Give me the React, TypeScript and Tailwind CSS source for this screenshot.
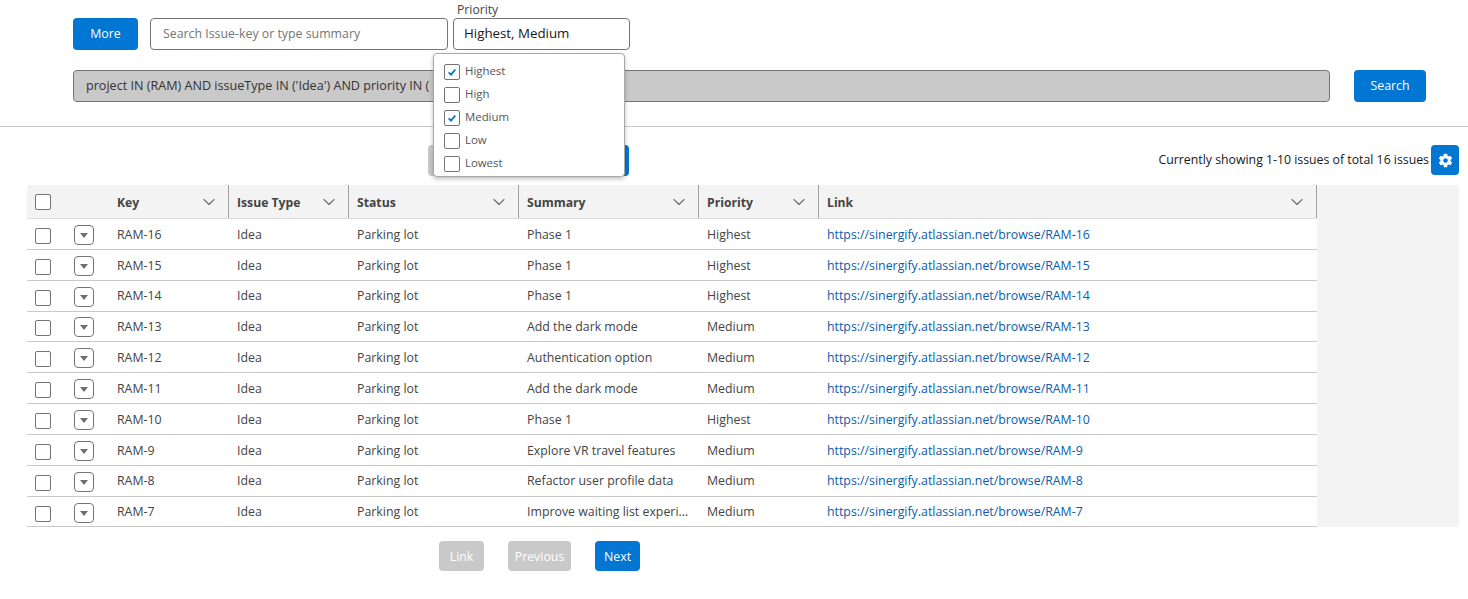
import { ChevronDown } from "lucide-react";
import { IoSettingsSharp } from "react-icons/io5";

const font = "font-['Open_Sans',sans-serif]";

const rows = [
  ["RAM-16", "Phase 1", "Highest"],
  ["RAM-15", "Phase 1", "Highest"],
  ["RAM-14", "Phase 1", "Highest"],
  ["RAM-13", "Add the dark mode", "Medium"],
  ["RAM-12", "Authentication option", "Medium"],
  ["RAM-11", "Add the dark mode", "Medium"],
  ["RAM-10", "Phase 1", "Highest"],
  ["RAM-9", "Explore VR travel features", "Medium"],
  ["RAM-8", "Refactor user profile data", "Medium"],
  ["RAM-7", "Improve waiting list experience", "Medium"],
];

const columns = ["Key", "Issue Type", "Status", "Summary", "Priority", "Link"];
const gridCols = "grid grid-cols-[82px_120px_120px_170px_180px_120px_498px]";

const Box = ({ checked = false }: { checked?: boolean }) => (
  <span className="flex h-4 w-4 shrink-0 items-center justify-center rounded-[2px] border border-[#747474] bg-white">
    {checked && (
      <svg viewBox="0 0 12 12" className="h-[10px] w-[10px]">
        <path d="M2 6.5 L4.8 9.2 L10 3" fill="none" stroke="#0176d3" strokeWidth="2.2" />
      </svg>
    )}
  </span>
);

const Btn = ({ label, off = false, className = "" }: { label: string; off?: boolean; className?: string }) => (
  <button className={`flex items-center justify-center rounded-[4px] pt-px text-white ${off ? "bg-[#c9c9c9]" : "bg-[#0176d3]"} ${className}`}>
    {label}
  </button>
);

export default function App() {
  return (
    <div className={`relative h-[599px] w-[1468px] overflow-hidden bg-white text-[12.35px] text-[#444] ${font}`}>
      <div className="flex pl-[73px] pt-[18px]">
        <Btn label="More" className="h-8 w-[65px]" />
        <div className="ml-3 flex h-8 w-[298px] items-center rounded-[4px] border border-[#747474] px-3 pt-px text-[#757575]">
          Search Issue-key or type summary
        </div>
        <div className="relative ml-[5px] flex h-8 w-[177px] items-center rounded-[4px] border border-[#747474] px-[10px] text-[13.3px] text-[#181818]">
          <span className="absolute -top-[18px] left-[3px] text-[12.2px] text-[#444]">Priority</span>
          Highest, Medium
        </div>
      </div>

      <div className="mt-5 flex pl-[73px]">
        <div className="flex h-8 w-[1257px] items-center rounded-[4px] border border-[#747474] bg-[#c9c9c9] px-3 pt-px text-[12.6px] text-[#333]">
          project IN (RAM) AND issueType IN ('Idea') AND priority IN (
        </div>
        <Btn label="Search" className="ml-6 h-8 w-[72px]" />
      </div>

      <div className="mt-6 h-px bg-[#c9c9c9]" />

      <div className="flex h-[58px] items-start pl-[428px] pr-[9px] pt-[18px]">
        <div className="flex gap-6">
          <Btn label="Link" off className="h-[31px] w-[45px]" />
          <Btn label="Previous" off className="h-[31px] w-[63px]" />
          <Btn label="Next" className="h-[31px] w-[45px]" />
        </div>
        <span className="ml-auto mr-[2px] mt-[6px] text-[12.3px] text-[#181818]">Currently showing 1-10 issues of total 16 issues</span>
        <button className="flex h-[30px] w-[28px] items-center justify-center rounded-[4px] bg-[#0176d3]">
          <IoSettingsSharp size={15} color="white" />
        </button>
      </div>

      <div className="ml-[27px] w-[1432px] bg-[#f3f3f3]">
        <div className={`${gridCols} h-[34px] w-[1290px] border-b border-[#dcdcdc]`}>
          <div className="flex items-center pl-2 pt-px">
            <Box />
          </div>
          {columns.map((c) => (
            <div key={c} className="flex h-[33px] items-center justify-between border-r border-[#a0a0a0] pl-2 pr-[9px] pt-[3px] text-[12.2px] font-bold text-[#444]">
              {c}
              <ChevronDown size={20} strokeWidth={1.3} className="-mt-[2px] text-[#706e6b]" />
            </div>
          ))}
        </div>
        {rows.map((r) => (
          <div key={r[0]} className={`${gridCols} h-[30.85px] w-[1290px] items-center border-b border-[#c9c9c9] bg-white pt-[2px]`}>
            <div className="flex items-center pl-2">
              <span className="mt-[2px]">
                <Box />
              </span>
              <span className="ml-[23px] flex h-[20px] w-[20px] items-center justify-center rounded-[4px] border border-[#747474]">
                <span className="mt-[1px] h-0 w-0 border-x-[4px] border-t-[5px] border-x-transparent border-t-[#706e6b]" />
              </span>
            </div>
            <div className="pl-2">{r[0]}</div>
            <div className="pl-2">Idea</div>
            <div className="pl-2">Parking lot</div>
            <div className="truncate pl-2 pr-2">{r[1]}</div>
            <div className="pl-2">{r[2]}</div>
            <a className="pl-2 text-[#0b5cab]">https://sinergify.atlassian.net/browse/{r[0]}</a>
          </div>
        ))}
      </div>

      <div className="mt-[14px] flex gap-6 pl-[439px]">
        <Btn label="Link" off className="h-[30px] w-[45px]" />
        <Btn label="Previous" off className="h-[30px] w-[63px]" />
        <Btn label="Next" className="h-[30px] w-[45px]" />
      </div>

      <div className="absolute left-[433px] top-[53px] flex h-[124px] w-[192px] flex-col gap-[7px] rounded-[4px] border border-[#a8a8a8] bg-white pl-[10px] pt-[10px] shadow-[0_2px_4px_rgba(0,0,0,0.25)]">
        {[
          ["Highest", true],
          ["High", false],
          ["Medium", true],
          ["Low", false],
          ["Lowest", false],
        ].map(([label, on]) => (
          <div key={label as string} className="flex h-4 items-center gap-[5px] text-[11.4px] text-[#555]">
            <Box checked={on as boolean} />
            <span className="-mt-[3px]">{label as string}</span>
          </div>
        ))}
      </div>
    </div>
  );
}
